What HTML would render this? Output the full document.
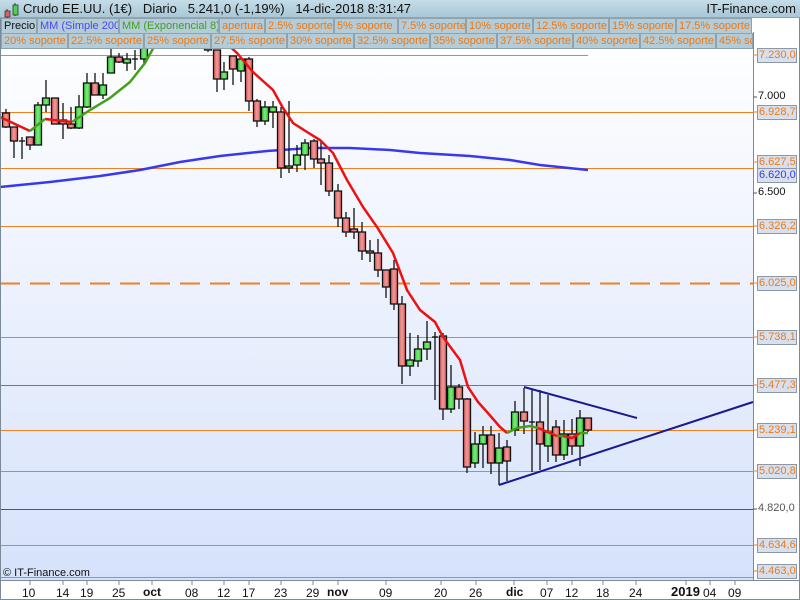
<!DOCTYPE html>
<html><head><meta charset="utf-8"><style>
*{margin:0;padding:0;box-sizing:border-box}
body{width:800px;height:600px;overflow:hidden;font-family:"Liberation Sans",sans-serif;background:#fff;position:relative}
#hdr{position:absolute;left:0;top:0;width:800px;height:18px;background:linear-gradient(#c4dde8,#a9c7d6);border-bottom:1px solid #8aa;font-size:13px;color:#111}
.b{position:absolute;height:16px;background:#b4ccd8;border:1px solid #8fa3ae;font-size:11px;line-height:14px;padding-left:2px;white-space:nowrap;overflow:hidden;color:#f07810}
.lab{position:absolute;left:757px;width:40px;height:15px;background:#d8e0ee;border:1px solid #8a98a8;font-size:11px;line-height:13px;color:#f07810;padding-left:1px;white-space:nowrap;overflow:hidden}
.tk{position:absolute;font-size:12px;color:#111;white-space:nowrap}
.tr{position:absolute;left:758px;font-size:11px;color:#111}
</style></head><body>
<svg width="800" height="600" style="position:absolute;left:0;top:0">
<defs>
<linearGradient id="bg" x1="0" y1="0" x2="0" y2="1"><stop offset="0" stop-color="#ffffff"/><stop offset="1" stop-color="#d6e2fb"/></linearGradient>
<linearGradient id="rd" x1="0" y1="0" x2="1" y2="0"><stop offset="0" stop-color="#d85858"/><stop offset=".5" stop-color="#f29a9a"/><stop offset="1" stop-color="#d85858"/></linearGradient>
<linearGradient id="gr" x1="0" y1="0" x2="1" y2="0"><stop offset="0" stop-color="#38c038"/><stop offset=".5" stop-color="#78ee78"/><stop offset="1" stop-color="#38c038"/></linearGradient>
</defs>
<rect x="0" y="32" width="753" height="548" fill="url(#bg)"/>
<g stroke="#f08020" stroke-width="1">
<line x1="0" y1="55.5" x2="588" y2="55.5"/>
<line x1="0" y1="112.5" x2="753" y2="112.5"/>
<line x1="0" y1="168.5" x2="753" y2="168.5"/>
<line x1="0" y1="226.5" x2="753" y2="226.5"/>
<line x1="0" y1="337.5" x2="753" y2="337.5"/>
<line x1="0" y1="430.5" x2="753" y2="430.5"/>
<line x1="0" y1="471.5" x2="753" y2="471.5"/>
<line x1="0" y1="545.5" x2="753" y2="545.5"/>
<line x1="0" y1="577.5" x2="753" y2="577.5"/>
<line x1="0" y1="283.5" x2="753" y2="283.5" stroke-width="2" stroke-dasharray="20,10"/>
</g>
<line x1="0" y1="385.5" x2="753" y2="385.5" stroke="#707888"/>
<line x1="0" y1="509.5" x2="753" y2="509.5" stroke="#505868"/>
<polyline fill="none" stroke="#3838ee" stroke-width="2.5" points="0,187 50,182 100,176 140,170 180,162 220,156 267,151 310,148 350,148 390,150 420,153 470,156 510,160 540,165 588,170"/>
<g id="c" stroke="#111" stroke-width="1.3"></g>
<polyline fill="none" stroke="#ee1111" stroke-width="2.5" points="0,117 30,131"/>
<polyline fill="none" stroke="#ee1111" stroke-width="2.5" points="45,119 72,122"/>
<polyline fill="none" stroke="#44a018" stroke-width="2.5" points="30,131 45,119"/>
<polyline fill="none" stroke="#44a018" stroke-width="2.5" points="72,122 90,110 110,98 130,82 145,63 155,45"/>
<polyline fill="none" stroke="#ee1111" stroke-width="2.5" points="228,45 237,53 253,72 273,90 283,108 293,123 307,132 320,140 333,153 347,180 363,207 377,227 393,253 407,290 420,310 435,322 443,337 460,360 468,387 478,402 487,412 500,427 507,433"/>
<polyline fill="none" stroke="#44a018" stroke-width="2.5" points="507,433 517,428 530,426 538,428"/>
<polyline fill="none" stroke="#ee1111" stroke-width="2.5" points="538,428 557,436"/>
<polyline fill="none" stroke="#44a018" stroke-width="2.5" points="557,436 563,436"/>
<polyline fill="none" stroke="#ee1111" stroke-width="2.5" points="563,436 572,438 580,433"/>
<polyline fill="none" stroke="#44a018" stroke-width="2.5" points="580,433 588,433"/>
<g stroke="#1a1a90" stroke-width="2">
<line x1="524" y1="387" x2="637" y2="418"/>
<line x1="499" y1="485" x2="753" y2="402"/>
</g>
<line x1="753.5" y1="32" x2="753.5" y2="580" stroke="#7a8a99"/>
<line x1="0" y1="580.5" x2="800" y2="580.5" stroke="#7a8a99"/>
<rect x="0.5" y="0.5" width="799" height="599" fill="none" stroke="#7a8a99"/>
<g stroke="#7a8a99"><line x1="30" y1="580" x2="30" y2="585"/><line x1="63" y1="580" x2="63" y2="585"/><line x1="87" y1="580" x2="87" y2="585"/><line x1="119" y1="580" x2="119" y2="585"/><line x1="152" y1="580" x2="152" y2="585"/><line x1="192" y1="580" x2="192" y2="585"/><line x1="224" y1="580" x2="224" y2="585"/><line x1="249" y1="580" x2="249" y2="585"/><line x1="281" y1="580" x2="281" y2="585"/><line x1="313" y1="580" x2="313" y2="585"/><line x1="338" y1="580" x2="338" y2="585"/><line x1="386" y1="580" x2="386" y2="585"/><line x1="441" y1="580" x2="441" y2="585"/><line x1="476" y1="580" x2="476" y2="585"/><line x1="514" y1="580" x2="514" y2="585"/><line x1="547" y1="580" x2="547" y2="585"/><line x1="572" y1="580" x2="572" y2="585"/><line x1="603" y1="580" x2="603" y2="585"/><line x1="636" y1="580" x2="636" y2="585"/><line x1="686" y1="580" x2="686" y2="585"/><line x1="710" y1="580" x2="710" y2="585"/><line x1="735" y1="580" x2="735" y2="585"/></g>
<g stroke="#f08020"><line x1="753" y1="55" x2="757" y2="55"/><line x1="753" y1="112" x2="757" y2="112"/><line x1="753" y1="162" x2="757" y2="162"/><line x1="753" y1="226" x2="757" y2="226"/><line x1="753" y1="283" x2="757" y2="283"/><line x1="753" y1="337" x2="757" y2="337"/><line x1="753" y1="385" x2="757" y2="385"/><line x1="753" y1="430" x2="757" y2="430"/><line x1="753" y1="471" x2="757" y2="471"/><line x1="753" y1="545" x2="757" y2="545"/><line x1="753" y1="571" x2="757" y2="571"/></g>
<g stroke="#555"><line x1="753" y1="97" x2="757" y2="97"/><line x1="753" y1="193" x2="757" y2="193"/><line x1="753" y1="509" x2="757" y2="509"/></g>
</svg>
<script>
var d=[[6,113,127,109,128,0],[14,127,141,127,158,0],[22,141,141,137,159,2],[30,137,145,137,150,0],[38,105,145,102,145,1],[46,98,105,80,112,1],[55,98,124,98,124,0],[63,120,124,103,139,0],[71,124,128,107,129,0],[79,107,128,95,129,1],[87,83,107,73,108,1],[95,83,95,73,95,0],[103,85,95,73,99,1],[111,57,73,48,73,1],[119,57,62,53,63,0],[127,59,63,53,71,1],[135,59,59,50,70,2],[144,35,59,30,65,1],[152,25,45,20,50,1],[208,40,50,36,52,0],[217,50,79,50,92,0],[224,72,79,62,90,1],[233,56,69,56,85,0],[241,59,71,59,82,1],[249,59,101,57,111,0],[257,101,121,99,127,0],[265,107,121,101,125,1],[273,107,112,101,128,1],[281,112,168,107,178,0],[289,166,168,101,173,1],[297,155,165,145,172,1],[305,143,155,139,170,1],[314,141,159,139,168,0],[321,159,163,140,185,0],[329,163,191,155,196,0],[338,191,218,184,227,0],[346,218,232,212,237,0],[354,229,232,208,239,0],[362,232,251,222,260,0],[370,251,253,240,262,0],[378,253,270,239,277,0],[386,270,287,270,298,0],[394,269,304,260,310,0],[402,304,366,296,384,0],[410,360,366,333,376,1],[418,349,361,335,367,1],[427,342,349,321,360,1],[435,337,337,332,400,2],[443,336,409,333,420,0],[451,387,409,365,413,1],[459,387,399,384,409,0],[467,399,467,398,473,0],[475,444,463,432,468,1],[483,435,444,426,468,1],[491,435,463,426,474,0],[499,448,463,433,485,1],[507,447,461,440,481,0],[515,412,430,401,436,1],[524,412,421,388,434,0],[532,422,422,390,472,2],[540,422,444,390,470,0],[548,432,446,395,462,1],[556,427,455,420,462,0],[564,434,455,420,460,1],[572,434,446,419,455,0],[580,418,446,410,466,1],[588,418,430,418,432,0]];
var s='';d.forEach(function(c){var x=c[0];s+='<line x1="'+x+'" y1="'+c[3]+'" x2="'+x+'" y2="'+c[4]+'"/>';if(c[5]==2){s+='<line x1="'+(x-3)+'" y1="'+c[1]+'" x2="'+(x+3)+'" y2="'+c[1]+'"/>';}else{var h=Math.max(c[2]-c[1],2);s+='<rect x="'+(x-3.5)+'" y="'+c[1]+'" width="7" height="'+h+'" fill="url(#'+(c[5]?'gr':'rd')+')"/>';}});
document.getElementById('c').innerHTML=s;
</script>
<div id="hdr">
<svg width="18" height="18" style="position:absolute;left:2px;top:1px"><line x1="5" y1="8" x2="5" y2="17" stroke="#333"/><rect x="3" y="10" width="5" height="6" fill="#e06060" stroke="#333" stroke-width=".8"/><line x1="13" y1="2" x2="13" y2="15" stroke="#333"/><rect x="11" y="4" width="5" height="10" fill="#50d050" stroke="#333" stroke-width=".8"/></svg>
<span style="position:absolute;left:23px;top:1px;white-space:nowrap">Crudo EE.UU. (1€) &nbsp;&nbsp;Diario &nbsp;&nbsp;5.241,0 (-1,19%) &nbsp;&nbsp;14-dic-2018 8:31:47</span>
<span style="position:absolute;right:4px;top:1px">IT-Finance.com</span>
</div>
<div class="b" style="left:1px;top:18px;width:36px;color:#111">Precio</div>
<div class="b" style="left:37px;top:18px;width:82px;color:#4848f8">MM (Simple 200)</div>
<div class="b" style="left:119px;top:18px;width:100px;color:#40a020">MM (Exponencial 8)</div>
<div class="b" style="left:219px;top:18px;width:46px">apertura</div>
<div class="b" style="left:265px;top:18px;width:69px">2.5% soporte</div>
<div class="b" style="left:334px;top:18px;width:64px">5% soporte</div>
<div class="b" style="left:398px;top:18px;width:68px">7.5% soporte</div>
<div class="b" style="left:466px;top:18px;width:67px">10% soporte</div>
<div class="b" style="left:533px;top:18px;width:76px">12.5% soporte</div>
<div class="b" style="left:609px;top:18px;width:67px">15% soporte</div>
<div class="b" style="left:676px;top:18px;width:76px">17.5% soporte</div>
<div class="b" style="left:1px;top:33px;width:67px">20% soporte</div>
<div class="b" style="left:68px;top:33px;width:76px">22.5% soporte</div>
<div class="b" style="left:144px;top:33px;width:67px">25% soporte</div>
<div class="b" style="left:211px;top:33px;width:76px">27.5% soporte</div>
<div class="b" style="left:287px;top:33px;width:67px">30% soporte</div>
<div class="b" style="left:354px;top:33px;width:76px">32.5% soporte</div>
<div class="b" style="left:430px;top:33px;width:67px">35% soporte</div>
<div class="b" style="left:497px;top:33px;width:76px">37.5% soporte</div>
<div class="b" style="left:573px;top:33px;width:67px">40% soporte</div>
<div class="b" style="left:640px;top:33px;width:76px">42.5% soporte</div>
<div class="b" style="left:716px;top:33px;width:37px">45% soporte</div>
<div class="lab" style="top:48px">7.230,0</div>
<div class="tr" style="top:90px">7.000</div>
<div class="lab" style="top:105px">6.928,7</div>
<div class="lab" style="top:155px">6.627,5</div>
<div class="lab" style="top:168px;color:#3838ee">6.620,0</div>
<div class="tr" style="top:186px">6.500</div>
<div class="lab" style="top:219px">6.326,2</div>
<div class="lab" style="top:276px">6.025,0</div>
<div class="lab" style="top:330px">5.738,1</div>
<div class="lab" style="top:378px">5.477,3</div>
<div class="lab" style="top:423px">5.239,1</div>
<div class="lab" style="top:464px">5.020,8</div>
<div class="tr" style="top:502px;color:#555">4.820,0</div>
<div class="lab" style="top:538px">4.634,6</div>
<div class="lab" style="top:564px">4.463,0</div>
<div class="tk" style="left:3px;top:567px;font-size:11px">© IT-Finance.com</div>
<div class="tk" style="left:22px;top:586px">10</div><div class="tk" style="left:56px;top:586px">14</div><div class="tk" style="left:80px;top:586px">19</div><div class="tk" style="left:112px;top:586px">25</div><div class="tk" style="left:143px;top:585px;font-weight:bold">oct</div><div class="tk" style="left:185px;top:586px">08</div><div class="tk" style="left:217px;top:586px">12</div><div class="tk" style="left:242px;top:586px">17</div><div class="tk" style="left:274px;top:586px">23</div><div class="tk" style="left:306px;top:586px">29</div><div class="tk" style="left:327px;top:585px;font-weight:bold">nov</div><div class="tk" style="left:379px;top:586px">09</div><div class="tk" style="left:434px;top:586px">20</div><div class="tk" style="left:469px;top:586px">26</div><div class="tk" style="left:506px;top:585px;font-weight:bold">dic</div><div class="tk" style="left:540px;top:586px">07</div><div class="tk" style="left:565px;top:586px">12</div><div class="tk" style="left:596px;top:586px">18</div><div class="tk" style="left:629px;top:586px">24</div><div class="tk" style="left:671px;top:584px;font-weight:bold;font-size:13px">2019</div><div class="tk" style="left:703px;top:586px">04</div><div class="tk" style="left:728px;top:586px">09</div>
</body></html>
